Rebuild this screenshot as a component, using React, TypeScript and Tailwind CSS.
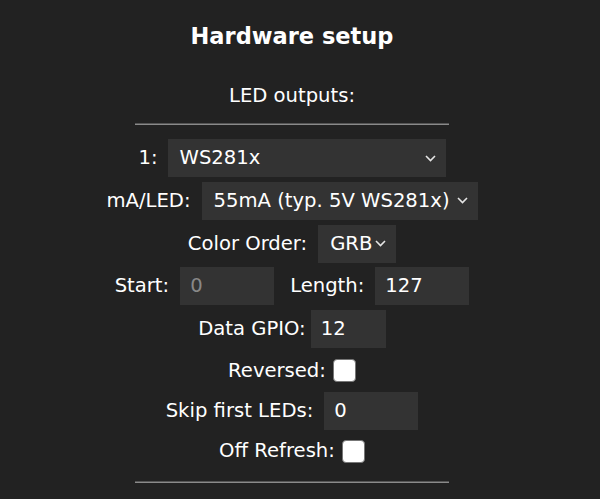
import React from "react";

const font = { fontFamily: '"DejaVu Sans", Verdana, sans-serif' };

function Chevron() {
  return (
    <svg width="11" height="7" viewBox="0 0 11 7" className="shrink-0">
      <polyline points="1,1 5.5,5.5 10,1" fill="none" stroke="#e5e5e5" strokeWidth="1.6" />
    </svg>
  );
}

function Select({ value, width }: { value: string; width: string }) {
  return (
    <div className={`flex h-[38px] items-center justify-between bg-[#333] pl-[12px] pr-[10px] ${width}`}>
      <span className="whitespace-nowrap">{value}</span>
      <Chevron />
    </div>
  );
}

function Field({ value, width, muted }: { value: string; width: string; muted?: boolean }) {
  return (
    <div
      className={`flex h-[38px] items-center bg-[#333] pl-[10px] ${width} ${muted ? "text-[#888]" : "text-white"}`}
    >
      {value}
    </div>
  );
}

function Check() {
  return <div className="h-[23px] w-[23px] rounded-[4px] border border-[#777] bg-white" />;
}

export default function App() {
  return (
    <div className="min-h-[499px] bg-[#222] text-white" style={font}>
      <div className="flex w-[584px] flex-col items-center pt-[22px] text-[19.6px]">
        <h2 className="text-[22.5px] font-bold leading-[28px]">Hardware setup</h2>
        <div className="mt-[34px] leading-[24px]">LED outputs:</div>
        <div className="mt-[15px] h-[2px] w-[314px] border-t border-t-[#555] bg-[#8a8a8a]" />

        <div className="mt-[12px] flex flex-col items-center">
          <div className="flex h-[42px] items-center gap-[10px]">
            <span>1:</span>
            <Select value="WS281x" width="w-[278px]" />
          </div>
          <div className="flex h-[43px] items-center gap-[11px]">
            <span>mA/LED:</span>
            <Select value="55mA (typ. 5V WS281x)" width="w-[276px]" />
          </div>
          <div className="flex h-[43px] items-center gap-[11px]">
            <span>Color Order:</span>
            <Select value="GRB" width="w-[78px]" />
          </div>
          <div className="flex h-[42px] items-center">
            <span>Start:</span>
            <div className="ml-[11px]">
              <Field value="0" width="w-[94px]" muted />
            </div>
            <span className="ml-[16px]">Length:</span>
            <div className="ml-[11px]">
              <Field value="127" width="w-[94px]" />
            </div>
          </div>
          <div className="flex h-[43px] items-center gap-[5px]">
            <span>Data GPIO:</span>
            <Field value="12" width="w-[75px]" />
          </div>
          <div className="flex h-[41px] items-center gap-[7px]">
            <span>Reversed:</span>
            <Check />
          </div>
          <div className="flex h-[40px] items-center gap-[11px]">
            <span>Skip first LEDs:</span>
            <Field value="0" width="w-[94px]" />
          </div>
          <div className="flex h-[40px] items-center gap-[7px]">
            <span>Off Refresh:</span>
            <Check />
          </div>
        </div>

        <div className="mt-[10px] h-[2px] w-[314px] border-t border-t-[#555] bg-[#8a8a8a]" />
      </div>
    </div>
  );
}
